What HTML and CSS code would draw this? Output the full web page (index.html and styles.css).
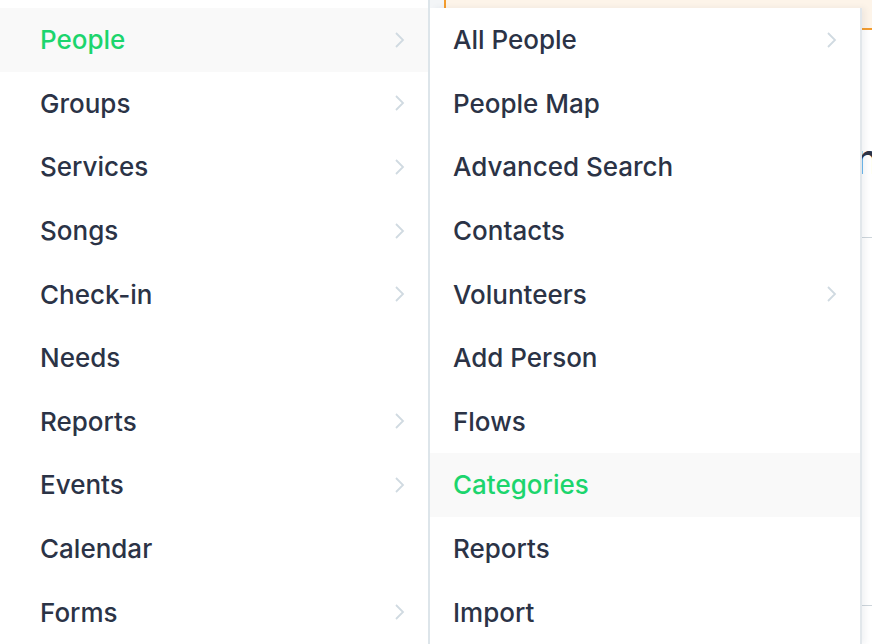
FILE: index.html
```html
<!DOCTYPE html>
<html lang="en">
<head>
    <meta charset="UTF-8">
    <title>People</title>
    <link rel="stylesheet" href="styles.css">
</head>
<body>
<div class="page">
    <div class="banner"></div>
    <div class="page-head">
        <h1 class="title">Admin</h1>
    </div>
    <div class="rule rule-top"></div>
    <div class="rule rule-bottom"></div>
</div>

<!--主菜单-->
<ul class="menu menu-main">
    <li class="item active">People<svg class="chev" viewBox="0 0 12 16"><polyline points="2,1 9,8 2,15"/></svg></li>
    <li class="item">Groups<svg class="chev" viewBox="0 0 12 16"><polyline points="2,1 9,8 2,15"/></svg></li>
    <li class="item">Services<svg class="chev" viewBox="0 0 12 16"><polyline points="2,1 9,8 2,15"/></svg></li>
    <li class="item">Songs<svg class="chev" viewBox="0 0 12 16"><polyline points="2,1 9,8 2,15"/></svg></li>
    <li class="item">Check-in<svg class="chev" viewBox="0 0 12 16"><polyline points="2,1 9,8 2,15"/></svg></li>
    <li class="item">Needs</li>
    <li class="item">Reports<svg class="chev" viewBox="0 0 12 16"><polyline points="2,1 9,8 2,15"/></svg></li>
    <li class="item">Events<svg class="chev" viewBox="0 0 12 16"><polyline points="2,1 9,8 2,15"/></svg></li>
    <li class="item">Calendar</li>
    <li class="item">Forms<svg class="chev" viewBox="0 0 12 16"><polyline points="2,1 9,8 2,15"/></svg></li>
</ul>

<!--子菜单-->
<ul class="menu menu-sub">
    <li class="item">All People<svg class="chev" viewBox="0 0 12 16"><polyline points="2,1 9,8 2,15"/></svg></li>
    <li class="item">People Map</li>
    <li class="item">Advanced Search</li>
    <li class="item">Contacts</li>
    <li class="item">Volunteers<svg class="chev" viewBox="0 0 12 16"><polyline points="2,1 9,8 2,15"/></svg></li>
    <li class="item">Add Person</li>
    <li class="item">Flows</li>
    <li class="item active">Categories</li>
    <li class="item">Reports</li>
    <li class="item">Import</li>
</ul>
</body>
</html>
```

FILE: styles.css
```css
body, ul, li, h1 {
    margin: 0;
    padding: 0;
    list-style: none;
}

body {
    width: 872px;
    height: 644px;
    overflow: hidden;
    position: relative;
    background: #fff;
    font-family: Inter, "Noto Sans", sans-serif;
    color: #2b3346;
}

.page {
    height: 644px;
    padding-left: 430px;
    background: #fff;
}

.banner {
    height: 28px;
    background: #fdf4e9;
    border-left: 14px solid #f3f5f7;
    border-bottom: 2px solid #f39c2e;
    position: relative;
}

.banner:before {
    content: "";
    position: absolute;
    left: 0;
    top: 0;
    bottom: -2px;
    width: 2px;
    background: #f39c2e;
}

.page-head {
    margin-right: -8px;
    padding-top: 105px;
    text-align: right;
}

.title {
    font-size: 42px;
    font-weight: 500;
    line-height: 48px;
}

.rule {
    height: 1px;
    background: #cdd5db;
}

.rule-top {
    margin-top: 54px;
}

.rule-bottom {
    margin-top: 367px;
}

.menu {
    position: absolute;
    top: 0;
    background: #fff;
    padding-top: 8px;
}

.menu-main {
    left: 0;
    width: 428px;
    height: 636px;
    border-right: 2px solid #dde5ea;
}

.menu-sub {
    left: 430px;
    top: 8px;
    padding-top: 0;
    width: 430px;
    height: 636px;
    box-shadow: 2px 0 0 #e2e7eb, 5px 0 6px rgba(60, 80, 100, 0.08);
}

.item {
    height: 63.6px;
    display: flex;
    align-items: center;
    justify-content: space-between;
    padding: 0 22px 0 40px;
    font-size: 26px;
    font-weight: 500;
}

.menu-sub .item {
    padding-left: 23px;
}

.item.active {
    background: #f9f9f9;
    color: #1cd56d;
}

.chev {
    width: 12px;
    height: 16px;
    fill: none;
    stroke: #d0dae1;
    stroke-width: 1.8;
}
```
